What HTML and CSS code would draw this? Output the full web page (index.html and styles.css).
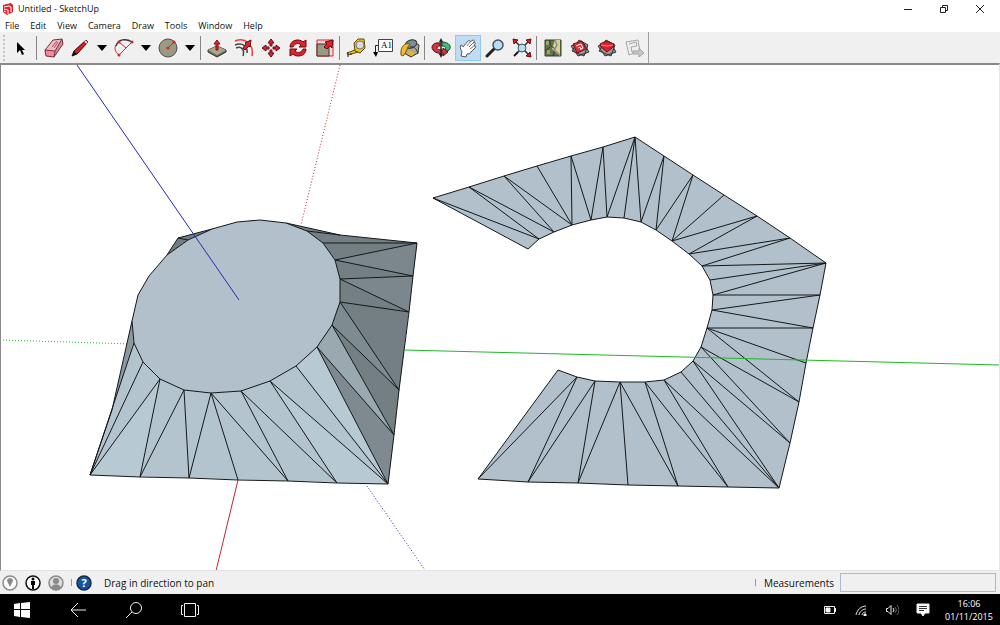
FILE: index.html
```html
<!DOCTYPE html>
<html lang="en">
<head>
    <meta charset="UTF-8">
    <meta name="viewport" content="width=device-width, initial-scale=1.0">
    <title>Untitled - SketchUp</title>
    <link rel="stylesheet" href="styles.css">
</head>
<body>
    <header class="title-bar">
        <svg class="app-logo" width="12" height="12" viewBox="0 0 12 12">
            <path d="M1 2l8-2 2 2v7l-6 3-4-3z" fill="#e3202a"/>
            <path d="M2 4l5-1 2 1v5M2 6l4 1v4M2 8l2 1" fill="none" stroke="#fff"/>
        </svg>
        <span class="title">Untitled - SketchUp</span>
        <div class="window-buttons">
            <button aria-label="Minimize"><svg width="10" height="10" viewBox="0 0 10 10"><path d="M1 5.500h8"/></svg></button>
            <button aria-label="Restore"><svg width="10" height="10" viewBox="0 0 10 10"><path d="M1.500 3.500h5v5h-5zM3.500 3v-1.500h5v5h-1.500"/></svg></button>
            <button aria-label="Close"><svg width="10" height="10" viewBox="0 0 10 10"><path d="M1 1l8 8M9 1l-8 8"/></svg></button>
        </div>
    </header>

    <nav class="menu-bar">
        <button>File</button>
        <button>Edit</button>
        <button>View</button>
        <button>Camera</button>
        <button>Draw</button>
        <button>Tools</button>
        <button>Window</button>
        <button>Help</button>
    </nav>

    <div class="toolbar-row">
        <div class="toolbar">
            <span class="grip"></span>
            <div class="group group-select">
                <button class="tool" aria-label="Select"><svg viewBox="0 0 20 20"><path d="M7 4v11l3-3 2 5 2-1-2-4h3z" fill="#000"/></svg></button>
            </div>
            <span class="separator"></span>
            <div class="group group-draw">
                <button class="tool" aria-label="Eraser"><svg viewBox="0 0 20 20"><path d="M1 12L9 2l9-1-7 11z" fill="#fbb6c4"/><path d="M1 12l10 1-1 6-8-1z" fill="#ff8495"/><path d="M11 13l7-12 1 5-9 13z" fill="#e58496"/><path d="M1 12L9 2l9-1 1 5-9 13-8-1zM1 12l10 1 7-12M11 13l-1 6" fill="none" stroke="#6a3540"/><path d="M8 9l5-6M10 10l4-6" stroke="#9a5764" fill="none"/></svg></button>
                <button class="tool" aria-label="Pencil"><svg viewBox="0 0 20 20"><path d="M2 18l2-5L16 2l2 2L7 16z" fill="#d51d22" stroke="#3a1010"/><path d="M2 18l2-5 3 3z" fill="#111"/><path d="M15 3l2 2" stroke="#ddd" stroke-width="2"/></svg></button>
                <button class="caret" aria-label="Line tools"></button>
                <button class="tool" aria-label="Arc"><svg viewBox="0 0 20 20"><path d="M2 8C4 1 12 0 18 4" fill="none" stroke="#333" stroke-width="1.500"/><path d="M5 17L18 4M5 4l7 6M5 17C1 14 0 10 2 7" fill="none" stroke="#e51e25"/><circle cx="18" cy="4" r="1.500" fill="#e51e25"/><circle cx="5" cy="17" r="1.500" fill="#e51e25"/><circle cx="5" cy="4" r="1.500" fill="#e51e25"/></svg></button>
                <button class="caret" aria-label="Arc tools"></button>
                <button class="tool" aria-label="Circle"><svg viewBox="0 0 20 20"><circle cx="10" cy="10" r="9" fill="#9b9980" stroke="#4d4d48"/><path d="M10 10l6-6" stroke="#f01820"/><circle cx="10" cy="10" r="1.500" fill="#f01820"/><circle cx="16" cy="4" r="1.500" fill="#f01820"/></svg></button>
                <button class="caret" aria-label="Shape tools"></button>
            </div>
            <span class="separator"></span>
            <div class="group">
                <button class="tool" aria-label="Push/Pull"><svg viewBox="0 0 20 20"><path d="M1 12l9-4 9 4v2l-9 5-9-5z" fill="#6d6c59" stroke="#33332c"/><path d="M1 12l9-4 9 4-9 5z" fill="#a8a78e"/><path d="M9 12V6H7l3-4 3 4h-2v6z" fill="#e5222b" stroke="#8a0c12"/></svg></button>
                <button class="tool" aria-label="Offset"><svg viewBox="0 0 20 20"><path d="M1 3c10-4 19 3 17 15" fill="none" stroke="#ef3b42" stroke-width="1.500"/><path d="M2 10c5-2 9 1 7 8M1 7c8-3 13 2 12 8" fill="none" stroke="#444" stroke-width="1.500"/><path d="M9 10l3-4-1-1 6-3-1 7-1-1-4 4z" fill="#e5222b" stroke="#69090e"/></svg></button>
                <button class="tool" aria-label="Move"><svg viewBox="0 0 20 20"><g fill="#e5222b" stroke="#69090e"><path d="M9 8V5H7l3-4 3 4h-2v3z"/><path d="M9 12v3H7l3 4 3-4h-2v-3z"/><path d="M8 9H5V7l-4 3 4 3v-2h3z"/><path d="M12 9h3V7l4 3-4 3v-2h-3z"/></g></svg></button>
                <button class="tool" aria-label="Rotate"><svg viewBox="0 0 20 20"><g fill="#e5222b" stroke="#69090e"><path d="M2 9c0-7 9-9 13-5l3-2v7h-7l2-2c-3-3-7-1-8 2z"/><path d="M18 11c0 7-9 9-13 5l-3 2v-7h7l-2 2c3 3 7 1 8-2z"/></g></svg></button>
                <button class="tool" aria-label="Scale"><svg viewBox="0 0 20 20"><path d="M2 2h16v16H2z" fill="#f8d8d8" stroke="#e5222b"/><path d="M2 6h12v12H2z" fill="#9b9980" stroke="#333"/><path d="M9 9l3-3-2-2 8-2-1 8-2-2-3 3z" fill="#e5222b" stroke="#69090e"/></svg></button>
            </div>
            <span class="separator"></span>
            <div class="group">
                <button class="tool" aria-label="Tape Measure"><svg viewBox="0 0 20 20"><path d="M1 15l8-3 3 2-10 3z" fill="#f7c51f" stroke="#5c4810"/><path d="M8 5l4-4h6l1 9-5 5-5-2z" fill="#f4bd1c" stroke="#5c4810"/><circle cx="14" cy="7" r="4" fill="#d8dce0" stroke="#777"/><path d="M2 14v5M5 15v2" stroke="#222"/></svg></button>
                <button class="tool" aria-label="Text"><svg viewBox="0 0 20 20"><path d="M5.500 1.500h14v12h-14z" fill="#fff" stroke="#444"/><path d="M5 7.500H2.500V16" fill="none" stroke="#222"/><path d="M0 14h5l-2 5z" fill="#000"/><text class="tool-label" x="8" y="10">A1</text></svg></button>
                <button class="tool" aria-label="Paint Bucket"><svg viewBox="0 0 20 20"><path d="M5 8l6-6 8 5-1 8-7 4-7-4z" fill="#a9a991" stroke="#35352d"/><ellipse cx="11" cy="6" rx="6" ry="4" transform="rotate(-20 11 6)" fill="#78909a" stroke="#333"/><path d="M1 17C0 9 5 4 10 6 7 9 7 14 3 18z" fill="#f3bd2b" stroke="#6c531c"/><path d="M10 9c5-1 7 3 8 7" stroke="#333" fill="none"/><path d="M9 12l6 3-3 3-5-3z" fill="#e6b533"/></svg></button>
            </div>
            <span class="separator"></span>
            <div class="group">
                <button class="tool" aria-label="Orbit"><svg viewBox="0 0 20 20"><path d="M9 5C3 4-1 8 2 12c2 3 7 4 10 3v3l5-4-5-4v2c-4 0-7-1-6-2 0-2 2-2 3-2z" fill="#dc303a" stroke="#50151a"/><path d="M11 4c7 0 11 5 6 9l-3-2c2-2 0-3-3-3z" fill="#48b97c" stroke="#184b30"/><path d="M10 2v16" stroke="#222" stroke-width="1.500"/><path d="M8 4l2-4 2 4zM8 16l2 4 2-4z" fill="#222"/></svg></button>
                <button class="tool active" aria-label="Pan"><svg viewBox="0 0 20 20"><path d="M3 18l1-4c-2-3-2-6-1-7 1 0 2 1 2 2l5-6c1-1 3 0 2 1l3-2c1 0 2 1 1 2l-1 1c2-1 3 0 2 1l-1 2c2-1 2 1 1 2l-4 4c-1 2-3 2-4 2l-1 3z" fill="#fff" stroke="#555"/><path d="M12 4l-3 4M15 5l-4 4M16 8l-4 3" stroke="#777" fill="none"/></svg></button>
                <button class="tool" aria-label="Zoom"><svg viewBox="0 0 20 20"><path d="M2 18l7-7" stroke="#222" stroke-width="3" stroke-linecap="round"/><circle cx="13" cy="7" r="5" fill="#b7ddf3" stroke="#44525c" stroke-width="1.500"/></svg></button>
                <button class="tool" aria-label="Zoom Extents"><svg viewBox="0 0 20 20"><path d="M3 3l14 14M17 3L3 17" stroke="#333" stroke-width="1.500"/><g fill="#dd1c26" stroke="#690b10"><path d="M1 1l5 1-4 4zM19 1l-5 1 4 4zM19 19l-5-1 4-4z"/></g><circle cx="10" cy="10" r="4" fill="#b7ddf3" stroke="#44525c"/><path d="M6 14l-4 4" stroke="#222" stroke-width="2"/></svg></button>
            </div>
            <span class="separator"></span>
            <div class="group">
                <button class="tool" aria-label="Add Location"><svg viewBox="0 0 20 20"><path d="M2 2h16v16H2z" fill="#68734b" stroke="#373b2e"/><path d="M12 2h5v16l-8-7z" fill="#dfcf8e"/><path d="M7 2v5l5 4-2 7M2 13l5-4" stroke="#303529" fill="none"/><path d="M12 2l2 5-3 5 6 5" fill="none" stroke="#7894a0" stroke-width="1.500"/><path d="M3 3h3v4H3zM4 12h3v4H4z" fill="#96a46b"/></svg></button>
                <button class="tool" aria-label="Get Models"><svg viewBox="0 0 20 20"><path d="M1 8l12-4 6 10-11 4zM2 13L9 2l9 5-4 11z" fill="#999" stroke="#333"/><path d="M3 6l9-3 4 8-9 4z" fill="#e52a34" stroke="#6c1217"/><path d="M6 8l5-2 2 4-3 1M8 10l2-1 1 3" stroke="#fff" fill="none"/></svg></button>
                <button class="tool" aria-label="Extension Warehouse"><svg viewBox="0 0 20 20"><path d="M1 8l12-4 6 10-11 4zM2 13L9 2l9 5-4 11z" fill="#999" stroke="#333"/><path d="M3 6l6-3 8 3-1 3-6 5-6-5z" fill="#dc202a" stroke="#6c1217"/><path d="M4 7l6 1 6-1" stroke="#ff858b" fill="none"/></svg></button>
                <button class="tool" aria-label="Send to LayOut"><svg viewBox="0 0 20 20"><g fill="#eee" stroke="#a5a5a5"><path d="M2 4l12-2 2 11-11 4zM5 6l7-2 1 4-6 1 1 5 4-1"/><path d="M9 13h6v-3l5 5-5 4v-3H9z" fill="#c6c6c6"/></g></svg></button>
            </div>
        </div>
    </div>

    <main class="canvas">
        <svg viewBox="1 65 998 505" role="img" aria-label="Loft model and its unfolded surface">
            <!-- hidden half of the axes -->
            <path class="axis dotted red" d="M340 65L301 225"/>
            <path class="axis dotted green" d="M0 340L133 344"/>
            <path class="axis dotted blue" d="M367 486L425 570"/>

            <!-- loft, square base to round top -->
            <path fill="#737e83" d="M178 238L212 229L188 240L167 255Z"/>
            <path fill="#8b989f" d="M132 321L134 343L112 410Z"/>
            <path fill="#b4c4ce" d="M134 343L112 410L90 475L388 484L317 347L211 393Z"/>
            <path fill="#747f84" d="M286 223L340 235L417 243L388 484L317 347L340 302L335 260Z"/>
            <path fill="#7b878c" d="M335 260L417 243L413 276ZM340 279L413 276L409 312Z"/>
            <path fill="#7e8b91" d="M340 302L399 390L332 325Z"/>
            <path fill="#9aa9b0" d="M317 347L332 325L394 435Z"/>
            <path fill="#7f8a90" d="M317 347L394 435L388 484Z"/>
            <path fill="#b7c9d3" d="M296 366L317 347L388 484ZM270 381L388 484L337 483ZM160 379L90 475L140 477Z"/>
            <path class="edge" d="M323 243H417L335 260L413 276L340 279L409 312L340 302L399 390L332 325L394 435L317 347L388 484L296 366M388 484L270 381L337 483L241 391L288 481L211 393L238 480M211 393L189 478L184 390L140 477L160 379L90 475L143 362M90 475L134 343M307 231L340 235M178 238L188 240"/>
            <path class="edge" d="M286 223L340 235L417 243L413 276L409 312L399 390L394 435L388 484L337 483L288 481L238 480L189 478L140 477L90 475L112 410L132 321M167 255L178 238L212 229"/>
            <path class="face" d="M260 220L286 223L307 231L323 243L335 260L340 279V302L332 325L317 347L296 366L270 381L241 391L211 393L184 390L160 379L143 362L134 343L132 321L138 295L149 276L167 255L188 240L212 229L237 222Z"/>

            <!-- unfolded surface -->
            <path class="face" d="M433 198L469 187L504 176L537 166L571 156L603 147L635 137L664 156L693 175L724 195L757 216L790 238L826 263L820 295L813 328L806 363L799 402L790 443L779 488L728 487L678 486L628 485L578 483L528 482L478 479L558 370L577 377L595 381L620 382H645L664 380L681 372L693 361L701 347L707 328L712 310L713 295L710 280L702 266L689 254L672 241L656 230L641 222L624 218L607 217L591 220L572 225L554 232L539 239L528 249Z"/>
            <path class="edge" d="M433 198L539 239L469 187L554 232L504 176L572 225L537 166M572 225L571 156L591 220L603 147L607 217L635 137L624 218M635 137L641 222L664 156L656 230L693 175L672 241L724 195M672 241L757 216L689 254L790 238L702 266L826 263L710 280M826 263L713 295H820L712 310L813 328H707L806 363M707 328L799 402L701 347L790 443L693 361L779 488L681 372M779 488L664 380L728 487L645 382L678 486L620 382L628 485M620 382L578 483L595 381L528 482L577 377L478 479"/>

            <path class="axis blue" d="M77 65L239 300"/>
            <path class="axis red" d="M238 480L216 571"/>
            <path class="axis green" d="M404 350L1000 365"/>
        </svg>
    </main>

    <footer class="status-bar">
        <button aria-label="Geo-location"><svg viewBox="0 0 16 16"><circle cx="8" cy="8" r="7" fill="#fff" stroke="#8b8b8b" stroke-width="1.500"/><path d="M8 12L5 6c0-4 6-4 6 0z" fill="#8b8b8b"/></svg></button>
        <button aria-label="Credits"><svg viewBox="0 0 16 16"><circle cx="8" cy="8" r="7" fill="#fff" stroke="#111" stroke-width="1.500"/><circle cx="8" cy="4" r="1.500"/><path d="M6 6h4v4H9v4H7v-4H6z"/></svg></button>
        <button aria-label="Sign in"><svg viewBox="0 0 16 16"><circle cx="8" cy="8" r="7" fill="#ddd" stroke="#8b8b8b" stroke-width="1.500"/><circle cx="8" cy="6" r="3" fill="#8b8b8b"/><path d="M3 13c1-5 9-5 10 0-3 3-7 3-10 0z" fill="#8b8b8b"/></svg></button>
        <span class="tick"></span>
        <button aria-label="Help"><svg viewBox="0 0 16 16"><circle cx="8" cy="8" r="7" fill="#1556a0" stroke="#172a42" stroke-width="1.500"/><text class="help-label" x="8" y="12">?</text></svg></button>
        <span class="hint">Drag in direction to pan</span>
        <span class="tick"></span>
        <label for="measurements">Measurements</label>
        <input type="text" id="measurements">
    </footer>

    <div class="taskbar">
        <button class="start" aria-label="Start"><svg width="16" height="16" viewBox="0 0 16 16"><path d="M0 2l6-1v6H0zM7 1l9-1v7H7zM0 8h6v7l-6-1zM7 8h9v8l-9-1z" fill="#fff"/></svg></button>
        <button aria-label="Back"><svg width="16" height="16" viewBox="0 0 16 16"><path d="M8 1L1 8l7 7M1 8h15"/></svg></button>
        <button aria-label="Search"><svg width="16" height="16" viewBox="0 0 16 16"><circle cx="10" cy="6" r="5.500"/><path d="M6 10l-6 6"/></svg></button>
        <button aria-label="Task View"><svg width="20" height="16" viewBox="0 0 20 16"><path d="M4.500 1.500h11v13h-11zM3 3.500H1.500v9H3M17 3.500h1.500v9H17"/></svg></button>
        <div class="tray">
            <button aria-label="Battery"><svg width="14" height="10" viewBox="0 0 14 10"><path d="M1.500 1.500h10v7h-10zM12.500 3v4"/><path d="M3 3h4v4H3z" fill="#fff"/></svg></button>
            <button aria-label="Network"><svg width="12" height="12" viewBox="0 0 12 12"><path d="M1 11C2 6 6 2 11 2M4 11c0-3 4-6 7-6M7 11c0-2 2-3 4-3"/><path d="M9 10h2v2H9z" fill="#fff"/></svg></button>
            <button aria-label="Volume"><svg width="14" height="12" viewBox="0 0 14 12"><path d="M1.500 4.500H3l3-3v9l-3-3H1.500zM8 4q2 2 0 4"/><path d="M10 3q3 3 0 6M12 1q4 5 0 10" stroke="#666"/></svg></button>
            <button aria-label="Notifications"><svg width="14" height="14" viewBox="0 0 14 14"><path d="M1 1h12v9H9l-2 3-2-3H1z" fill="#fff"/><path d="M3 3.500h8M3 5.500h8M3 7.500h5" stroke="#333"/></svg></button>
            <button class="clock"><span>16:06</span><span>01/11/2015</span></button>
        </div>
    </div>
</body>
</html>
```
FILE: styles.css
```css
* {
    box-sizing: border-box;
}
body {
    margin: 0;
    height: 100vh;
    display: flex;
    flex-direction: column;
    overflow: hidden;
    font-family: "Open Sans", "Noto Sans", sans-serif;
    font-size: 10px;
    line-height: 14px;
    color: #111;
    background-color: #fff;
}
button {
    padding: 0;
    border: none;
    background: none;
    font: inherit;
    color: inherit;
}
svg {
    display: block;
}
.title-bar {
    display: flex;
    align-items: center;
    height: 18px;
    padding: 0 2px;
    gap: 4px;
    font-size: 9px;
    flex-shrink: 0;
}
.window-buttons {
    display: flex;
    margin-left: auto;
}
.window-buttons button {
    display: flex;
    justify-content: center;
    width: 36px;
}
.window-buttons svg {
    fill: none;
    stroke: #222;
}
.menu-bar {
    display: flex;
    height: 14px;
    padding-left: 5px;
    gap: 11px;
    font-size: 9px;
    line-height: 16px;
    flex-shrink: 0;
}
.toolbar-row {
    display: flex;
    height: 31px;
    background-color: #f0f0f0;
    flex-shrink: 0;
}
.toolbar {
    display: flex;
    align-items: center;
    padding: 1px 1px 1px 3px;
    border-right: 1px solid #a0a0a0;
}
.grip {
    width: 2px;
    height: 26px;
    margin-right: 2px;
    border-left: 2px dotted #c4c4c4;
}
.group {
    display: flex;
    gap: 1px;
}
.group-select {
    padding-right: 2px;
}
.group-draw {
    gap: 0;
    padding-left: 1px;
}
.separator {
    width: 1px;
    height: 24px;
    margin: 0 3px 0 1px;
    background-color: #858585;
}
.tool {
    display: flex;
    align-items: center;
    justify-content: center;
    width: 26px;
    height: 26px;
}
.tool svg {
    width: 20px;
    height: 20px;
}
.tool.active {
    background-color: #c0dcf3;
    border: 1px solid #90c8f6;
}
.tool-label {
    font-family: "Liberation Serif", serif;
    font-size: 9px;
}
.caret {
    display: flex;
    align-items: center;
    justify-content: center;
    width: 18px;
}
.caret::before {
    content: "";
    border: 5px solid transparent;
    border-top: 6px solid #000;
    border-bottom: none;
}
.canvas {
    flex: 1;
    min-height: 0;
    border-top: 2px solid #8a8a8a;
    border-left: 1px solid #8a8a8a;
    border-right: 1px solid #e3e3e3;
    border-bottom: 1px solid #e3e3e3;
}
.canvas svg {
    width: 100%;
    height: 100%;
}
.face {
    fill: #b1c0cb;
    stroke: #14181a;
    stroke-linejoin: round;
}
.edge {
    fill: none;
    stroke: #14181a;
    stroke-linejoin: round;
}
.axis {
    fill: none;
}
.axis.dotted {
    stroke-dasharray: 1 2;
}
.red {
    stroke: #c02830;
}
.green {
    stroke: #20b828;
}
.blue {
    stroke: #2828c0;
}
.status-bar {
    display: flex;
    align-items: center;
    height: 23px;
    padding: 0 4px 0 2px;
    background-color: #f0f0f0;
    flex-shrink: 0;
}
.status-bar button {
    width: 16px;
    margin-right: 7px;
}
.status-bar button svg {
    width: 16px;
    height: 16px;
}
.help-label {
    fill: #fff;
    font-size: 11px;
    font-weight: bold;
    text-anchor: middle;
}
.tick {
    width: 1px;
    height: 7px;
    margin-right: 4px;
    background-color: #999;
}
.hint {
    margin-left: 5px;
    margin-right: auto;
}
.status-bar label {
    margin-left: 4px;
    margin-right: 6px;
}
.status-bar input {
    width: 156px;
    height: 19px;
    border: 1px solid #abb9d2;
    background-color: #f0f0f0;
    font: inherit;
}
.taskbar {
    display: flex;
    height: 31px;
    background-color: #000;
    color: #fff;
    flex-shrink: 0;
}
.taskbar button {
    display: flex;
    align-items: center;
    justify-content: center;
    width: 56px;
}
.taskbar svg {
    fill: none;
    stroke: #eee;
}
.taskbar .start {
    width: 44px;
    margin-right: 6px;
}
.taskbar .start svg {
    stroke: none;
}
.tray {
    display: flex;
    margin-left: auto;
}
.tray button {
    width: 31px;
}
.tray .clock {
    flex-direction: column;
    width: 62px;
    font-size: 9px;
    line-height: 13px;
}
```
